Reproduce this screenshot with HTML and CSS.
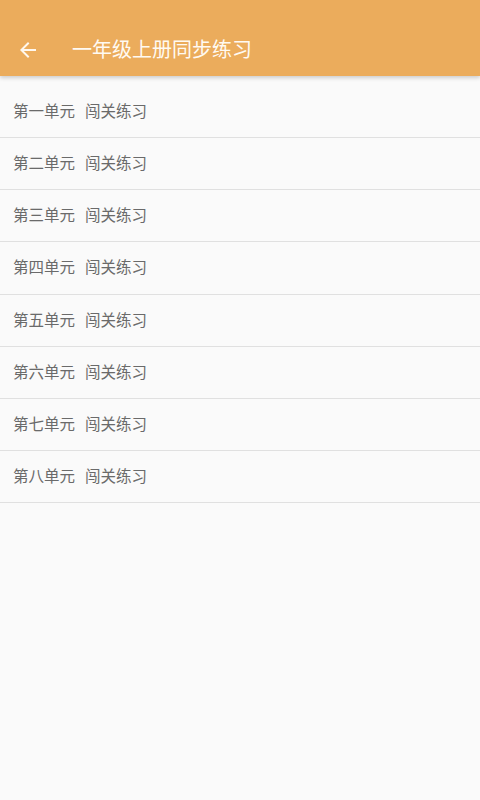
FILE: index.html
```html
<!DOCTYPE html>
<html lang="zh">
<head>
<meta charset="utf-8">
<title>一年级上册同步练习</title>
<link rel="stylesheet" href="styles.css">
</head>
<body>
<header class="appbar">
  <svg class="back" viewBox="0 0 24 24" width="24" height="24" aria-hidden="true">
    <path d="M20 11H7.83l5.59-5.59L12 4l-8 8 8 8 1.41-1.41L7.83 13H20v-2z" fill="#fff8ee"/>
  </svg>
  <h1 class="title">一年级上册同步练习</h1>
</header>
<ul class="list">
  <li class="row">第一单元<span class="sub">闯关练习</span></li>
  <li class="row">第二单元<span class="sub">闯关练习</span></li>
  <li class="row">第三单元<span class="sub">闯关练习</span></li>
  <li class="row">第四单元<span class="sub">闯关练习</span></li>
  <li class="row">第五单元<span class="sub">闯关练习</span></li>
  <li class="row">第六单元<span class="sub">闯关练习</span></li>
  <li class="row">第七单元<span class="sub">闯关练习</span></li>
  <li class="row">第八单元<span class="sub">闯关练习</span></li>
</ul>
</body>
</html>
```
FILE: styles.css
```css
html, body {
  margin: 0;
  padding: 0;
  height: 100%;
}
body {
  background: #fafafa;
  font-family: "Noto Sans CJK SC", "Noto Sans", sans-serif;
}
.appbar {
  height: 52px;
  padding-top: 24px;
  background: #ebac5c;
  display: flex;
  align-items: center;
  padding-left: 16px;
  box-shadow: 0 2px 4px rgba(0, 0, 0, 0.18);
  position: relative;
}
.back {
  display: block;
  width: 24px;
  height: 24px;
}
.title {
  margin: 0 0 0 32px;
  font-size: 20px;
  font-weight: 400;
  color: #fffaf2;
  line-height: 1;
  margin-top: -2px;
}
.list {
  list-style: none;
  margin: 0;
  padding: 10px 0 0 0;
}
.row {
  height: 48.14px;
  padding-bottom: 3px;
  border-bottom: 1px solid #e0e0e0;
  display: flex;
  align-items: center;
  padding-left: 13px;
  font-size: 15.5px;
  color: #6a6a6a;
}
.sub {
  margin-left: 10px;
}
```
